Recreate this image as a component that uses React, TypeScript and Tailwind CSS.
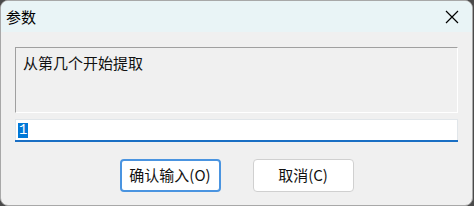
export default function App() {
  const font = { fontFamily: '"Noto Sans CJK SC", "Noto Sans", sans-serif' };
  return (
    <div className="w-[474px] h-[206px] bg-[#4a4a4a] overflow-hidden" style={font}>
      <div className="w-[473px] h-[206px] flex flex-col rounded-[8px] border border-[#a8a8a8] bg-[#f0f0f0] overflow-hidden">
        {/* title bar */}
        <div className="h-[31px] shrink-0 bg-[#e9f4f6] flex items-center justify-between pl-[5px] pr-[13px]">
          <span className="text-[15px] leading-none text-black">参数</span>
          <svg width="14" height="14" viewBox="0 0 14 14" className="text-black">
            <path d="M1 1 L13 13 M13 1 L1 13" stroke="currentColor" strokeWidth="1.2" />
          </svg>
        </div>

        {/* body */}
        <div className="flex-1 flex flex-col px-[14px] pt-[15px]">
          <div className="h-[66px] border border-t-[#a0a0a0] border-l-[#a0a0a0] border-b-white border-r-white pl-[7px] pt-[2px]">
            <span className="text-[15px] leading-[20px] text-[#111]">从第几个开始提取</span>
          </div>

          <div className="mt-[6px] h-[21px] bg-white border border-[#e1e6ea] border-b-0 flex items-center pl-[2px]">
            <span className="bg-[#0078d7] text-white text-[14px] leading-[15px] px-[1px] font-[Liberation_Mono]">1</span>
          </div>
          <div className="h-[2px] bg-[#1a6fc4]" />

          <div className="flex justify-center gap-[32px] mt-[17px]">
            <button className="w-[101px] h-[33px] bg-white rounded-[4px] border-2 border-[#4a94e0] text-[15px] text-[#111]">
              确认输入(O)
            </button>
            <button className="w-[101px] h-[33px] bg-white rounded-[4px] border border-[#d0d0d0] text-[15px] text-[#111]">
              取消(C)
            </button>
          </div>
        </div>
      </div>
    </div>
  );
}
